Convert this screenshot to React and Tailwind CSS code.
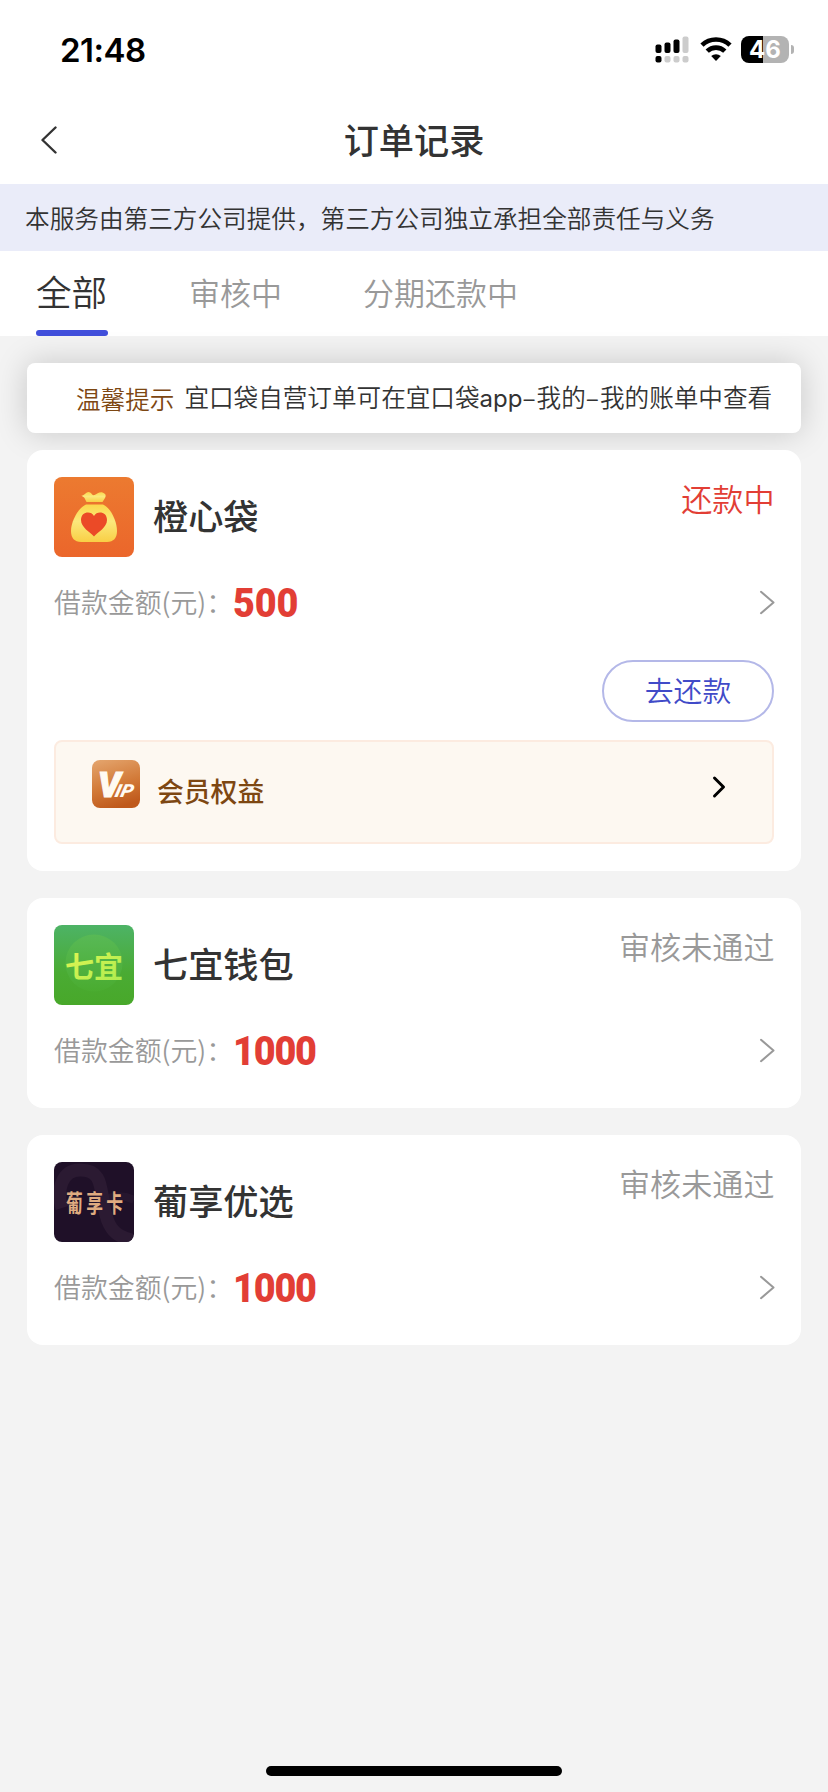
const CJK = "font-['Noto_Sans_CJK_SC',sans-serif]";

function StatusBar() {
  return (
    <div className="flex h-[96px] items-center justify-between pl-[60px] pr-[34px] pt-[3px]">
      <span className="mt-[2px] font-['Inter',sans-serif] text-[33px] font-semibold leading-none tracking-[-0.500px] text-black">21:48</span>
      <div className="flex items-center">
        <svg className="mr-[11px] h-[27px] w-[34px]" viewBox="0 0 34 27">
          <g fill="#000">
            <rect x="0.5" y="8.5" width="6" height="8.5" rx="2" />
            <rect x="9.5" y="6.5" width="6" height="10.5" rx="2" />
            <rect x="18.5" y="3.5" width="6" height="13.5" rx="2" />
            <rect x="0.5" y="20" width="6" height="6.5" rx="2" />
          </g>
          <g fill="#ccc">
            <rect x="27.5" y="0.5" width="6" height="16.5" rx="2" />
            <rect x="9.5" y="20" width="6" height="6.5" rx="2" />
            <rect x="18.5" y="20" width="6" height="6.5" rx="2" />
            <rect x="27.5" y="20" width="6" height="6.5" rx="2" />
          </g>
        </svg>
        <svg className="mr-[9px] h-[27px] w-[32px]" viewBox="0 0 32 27" fill="none" stroke="#000" strokeWidth="4.6">
          <path d="M2 9.200a20 20 0 0 1 28 0" />
          <path d="M7.200 15.200a12.500 12.500 0 0 1 17.600 0" />
          <path d="M16 25l-4.800-4.900a7 7 0 0 1 9.600 0z" fill="#000" stroke="none" />
        </svg>
        <div className="flex h-[27px] w-[48px] items-center justify-center rounded-[8px] bg-[linear-gradient(90deg,#000_46%,#b3b3b3_46%)] font-['Inter',sans-serif] text-[24px] font-bold leading-none text-white">
          46
        </div>
        <div className="ml-[2px] h-[9px] w-[3px] rounded-r-full bg-[#b3b3b3]" />
      </div>
    </div>
  );
}

function OrangeLogo() {
  return (
    <svg className="size-20 rounded-[8px]" viewBox="0 0 80 80">
      <defs>
        <linearGradient id="orange" x1="0" y1="0" x2="0" y2="1">
          <stop stopColor="#ec7a30" />
          <stop offset="1" stopColor="#eb662b" />
        </linearGradient>
        <linearGradient id="bag" x1="0" y1="0" x2="0" y2="1">
          <stop stopColor="#fbd84c" />
          <stop offset="0.45" stopColor="#fbe87c" />
          <stop offset="1" stopColor="#f9cf45" />
        </linearGradient>
      </defs>
      <rect width="80" height="80" fill="url(#orange)" />
      <path fill="url(#bag)" d="M27.500 18.500c2 .8 4.500-3.500 7-3.500 3 0 3.500 4 6 3s5-3.500 8-2.500 4 2.800 2.500 5.500L48.500 25H32.500l-2-4c-.8-1-2.200-1.400-3-2.500z" />
      <path fill="url(#bag)" d="M32 27.500h17c7.500 3 14 16.500 14 26.500 0 7-3.500 11-10 11H27c-6.500 0-10-4-10-11 0-10 7.500-23.500 15-26.500z" />
      <path fill="#eb4a27" d="M40 59.500c-4-4.500-13-9-13-16.500 0-8.500 10-9.500 13-4 3-5.500 13-4.500 13 4 0 7.500-9 12-13 16.500z" />
    </svg>
  );
}

function GreenLogo() {
  return (
    <svg className="size-20 rounded-[8px]" viewBox="0 0 80 80">
      <defs>
        <linearGradient id="green" x1="0" y1="0" x2="0" y2="1">
          <stop stopColor="#4db366" />
          <stop offset="0.6" stopColor="#4aab33" />
          <stop offset="1" stopColor="#48a82a" />
        </linearGradient>
        <linearGradient id="disc" x1="0" y1="0" x2="0" y2="1">
          <stop stopColor="#58b956" />
          <stop offset="1" stopColor="#4aac30" />
        </linearGradient>
        <linearGradient id="lime" x1="0" y1="0" x2="1" y2="1">
          <stop stopColor="#e8f552" />
          <stop offset="1" stopColor="#a8ec50" />
        </linearGradient>
      </defs>
      <rect width="80" height="80" fill="url(#green)" />
      <circle cx="40" cy="38" r="28.500" fill="url(#disc)" />
      <text x="11" y="52.500" fontSize="29" fontWeight="700" fill="url(#lime)" fontFamily="'Noto Sans CJK SC', sans-serif">七宜</text>
    </svg>
  );
}

function PurpleLogo() {
  return (
    <svg className="size-20 rounded-[8px]" viewBox="0 0 80 80">
      <rect width="80" height="80" fill="#1f1028" />
      <g fill="none" stroke="#2b1a32" strokeWidth="13">
        <path d="M8 46C2 28 8 8 26 8c22 0 20 16 24 36 3 18 8 30 28 34" />
        <path d="M50 40c4-6 18-8 30-2" strokeWidth="8" opacity=".6" />
      </g>
      <text transform="translate(12 49.500) scale(.84 1.200)" fontSize="20" letterSpacing="4" fontWeight="700" fill="#dfab80" fontFamily="'Noto Sans CJK SC', sans-serif">葡享卡</text>
    </svg>
  );
}

function VipIcon() {
  return (
    <svg className="size-12 rounded-[8px]" viewBox="0 0 48 48">
      <defs>
        <linearGradient id="vip" x1="0.200" y1="0" x2="0.500" y2="1">
          <stop stopColor="#e3a26a" />
          <stop offset="0.550" stopColor="#d27a38" />
          <stop offset="1" stopColor="#bf591b" />
        </linearGradient>
      </defs>
      <rect width="48" height="48" fill="url(#vip)" />
      <g fill="#fffaf2" stroke="#fffaf2" fontFamily="Roboto, sans-serif" fontStyle="italic" fontWeight="900">
        <text x="6" y="36.500" fontSize="35" strokeWidth="1.200">V</text>
        <text transform="translate(22 37) skewX(-14) scale(1.080 1)" fontSize="18" strokeWidth="0">IP</text>
      </g>
    </svg>
  );
}

function Chevron({ className, d, box, width }) {
  return (
    <svg className={className} viewBox={box} fill="none" stroke="currentColor" strokeWidth={width} strokeLinecap="round" strokeLinejoin="round">
      <path d={d} />
    </svg>
  );
}

function Amount({ value }) {
  const tracking = value.startsWith("1") ? "tracking-[-1.300px]" : "tracking-[-0.200px]";
  return (
    <span className={`origin-left scale-x-[.91] font-['Roboto',sans-serif] text-[41.500px] font-black leading-[46px] text-[#e23e35] ${tracking}`}>
      {value}
    </span>
  );
}

function OrderCard({ logo, name, status, statusClass, amount, children }) {
  return (
    <section className={`rounded-[16px] bg-white px-[27px] pt-[27px] ${children ? "pb-[27px]" : "pb-[33px]"}`}>
      <div className="flex h-20">
        {logo}
        <h2 className="ml-[19px] flex-1 text-[35.2px] font-medium leading-[76px] text-[#333]">{name}</h2>
        <span className={`mr-[-0.500px] text-[31.100px] font-[350] leading-[42px] ${statusClass}`}>{status}</span>
      </div>
      <div className="mt-[22px] flex h-[48px] items-center">
        <span className="w-[179px] whitespace-nowrap pb-[2px] text-[26.900px] font-[350] leading-[46px] text-[#999]">借款金额(元)：</span>
        <Amount value={amount} />
        <Chevron className="ml-auto mr-[-1px] h-[26px] w-[16px] text-[#999]" box="0 0 16 26" d="M2 1.800L14.500 12.500 2 23.200" width="2" />
      </div>
      {children}
    </section>
  );
}

export default function App() {
  return (
    <div className={`flex h-[1792px] w-[828px] flex-col bg-[#f3f3f3] text-[#333] ${CJK}`}>
      <header className="h-[184px] bg-white">
        <StatusBar />
        <div className="grid h-[88px] grid-cols-[1fr_auto_1fr] items-center pl-[40px] pr-[40px]">
          <Chevron className="h-[28px] w-[18px] text-[#333]" box="0 0 18 28" d="M15.500 1.500L2.500 14 15.500 26.500" width="2.400" />
          <h1 className="pb-[3px] text-[35.200px] font-medium leading-[85px]">订单记录</h1>
        </div>
      </header>
      <div className="h-[67px] whitespace-nowrap bg-[#eaecf9] pl-[25px] text-[24.640px] font-[350] leading-[66px]">
        本服务由第三方公司提供，第三方公司独立承担全部责任与义务
      </div>
      <nav className="flex h-[85px] bg-white pl-[36px] text-[31px] font-[350] text-[#999]">
        <div className="flex w-[72px] flex-col justify-between text-[35.500px] text-[#333]">
          <span className="leading-[79px]">全部</span>
          <span className="h-[6px] rounded-full bg-[#414fdb]" />
        </div>
        <span className="ml-[81px] leading-[82px]">审核中</span>
        <span className="ml-[81px] leading-[82px]">分期还款中</span>
      </nav>
      <main className="flex flex-col px-[27px] pt-[27px]">
        <div className="flex h-[70px] items-center whitespace-nowrap rounded-[8px] bg-white pb-px pl-[49px] text-[24.600px] font-[350] leading-[36px] shadow-[0_0_32px_rgba(0,0,0,0.18)]">
          <span className="mr-[10px] text-[#7d4712]">温馨提示</span>
          <span>
            宜口袋自营订单可在宜口袋
            <span className="font-['Inter',sans-serif] text-[24px] font-normal">app</span>
            <span className="tracking-[1px]">–</span>我的<span className="tracking-[1px]">–</span>我的账单中查看
          </span>
        </div>
        <div className="relative mt-[17px] flex flex-col gap-[27px]">
          <OrderCard logo={<OrangeLogo />} name="橙心袋" status="还款中" statusClass="text-[#e23e35]" amount="500">
            <div className="mt-[33px] flex justify-end">
              <button className="h-[62px] w-[172px] rounded-full border-2 border-[#b4b8e8] pb-[2px] text-[28.800px] font-[350] leading-[54px] text-[#414bc8]">去还款</button>
            </div>
            <div className="mt-[18px] flex h-[104px] rounded-[8px] border-2 border-[#fcebe0] bg-[#fdf8f1] pl-[36px] pr-[46px] pt-[18px]">
              <VipIcon />
              <span className="ml-[17px] mt-[7px] text-[26.800px] font-medium leading-[48px] text-[#7d4712]">会员权益</span>
              <Chevron className="ml-auto mt-[15px] h-[24px] w-[14px] text-black" box="0 0 14 24" d="M2.500 3L11.500 12 2.500 21" width="3" />
            </div>
          </OrderCard>
          <OrderCard logo={<GreenLogo />} name="七宜钱包" status="审核未通过" statusClass="text-[#999]" amount="1000" />
          <OrderCard logo={<PurpleLogo />} name="葡享优选" status="审核未通过" statusClass="text-[#999]" amount="1000" />
        </div>
      </main>
      <div className="mb-[16px] mt-auto h-[10px] w-[296px] self-center rounded-full bg-black" />
    </div>
  );
}
